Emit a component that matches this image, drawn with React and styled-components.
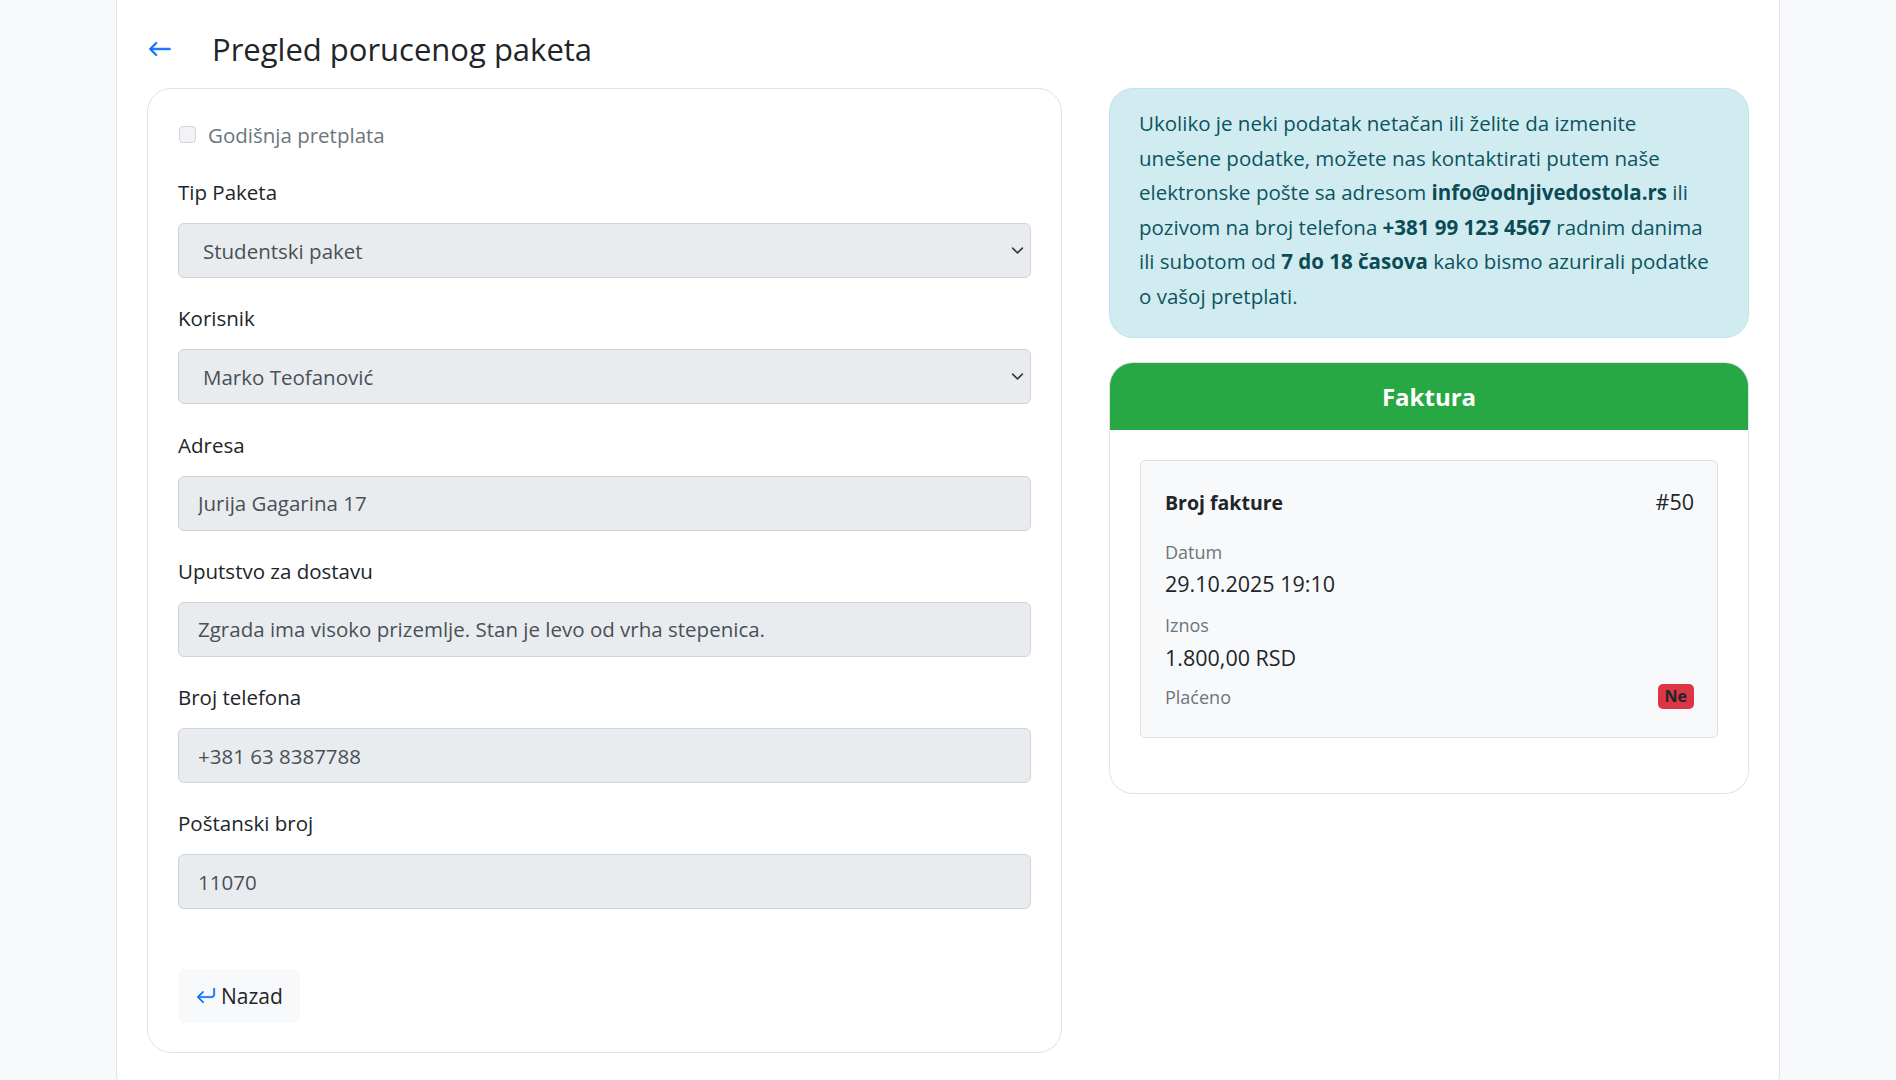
import React from "react";
import styled, { createGlobalStyle } from "styled-components";
import { BsArrowLeft, BsArrowReturnLeft } from "react-icons/bs";

const GlobalStyle = createGlobalStyle`
  * { box-sizing: border-box; }
  html, body {
    margin: 0;
    padding: 0;
    background: #f8f9fa;
    font-family: "Open Sans", "Noto Sans", sans-serif;
    color: #212529;
  }
`;

const Page = styled.div`
  min-height: 1080px;
  overflow: hidden;
`;

const Panel = styled.main`
  width: 1664px;
  margin: -12px auto 0;
  min-height: 1100px;
  background: #fff;
  border: 1px solid #dee2e6;
  border-radius: 12px;
  padding: 12px 30px 0;
`;

const Header = styled.header`
  height: 87px;
  display: flex;
  align-items: center;
  padding-top: 9px;
  padding-left: 1px;
  gap: 40px;
`;

const BackIcon = styled.span`
  display: flex;
  color: #0d6efd;
  font-size: 24px;
  svg {
    stroke: currentColor;
    stroke-width: 0.6px;
  }
`;

const Title = styled.h1`
  margin: 0;
  font-size: 31px;
  font-weight: 400;
  color: #212529;
`;

const Columns = styled.div`
  display: grid;
  grid-template-columns: 915px 1fr;
  gap: 47px;
  align-items: start;
`;

const Card = styled.section`
  border: 1px solid #dee2e6;
  border-radius: 24px;
  padding: 31px 30px 29px;
  background: #fff;
`;

const CheckRow = styled.label`
  display: flex;
  align-items: center;
  gap: 12px;
  height: 29px;
  font-size: 20.5px;
  color: #6c757d;
  margin-bottom: 29px;
`;

const Check = styled.input`
  appearance: none;
  margin: 0 0 0 1px;
  width: 17px;
  height: 17px;
  border: 1px solid #ced4da;
  border-radius: 4px;
  background: #f1f3f5;
`;

const Group = styled.div`
  margin-bottom: 26.3px;
`;

const Label = styled.label`
  display: block;
  font-size: 20.5px;
  line-height: 29px;
  margin-bottom: 16px;
  color: #212529;
`;

const chevron =
  "url(\"data:image/svg+xml,%3csvg xmlns='http://www.w3.org/2000/svg' viewBox='0 0 16 16'%3e%3cpath fill='none' stroke='%23343a40' stroke-linecap='round' stroke-linejoin='round' stroke-width='2' d='m2 5 6 6 6-6'/%3e%3c/svg%3e\")";

const Select = styled.select`
  appearance: none;
  display: block;
  width: 100%;
  height: 55px;
  padding: 0 40px 0 24px;
  font-family: inherit;
  font-size: 20.5px;
  color: #495057;
  background-color: #e9ecef;
  background-image: ${chevron};
  background-repeat: no-repeat;
  background-position: right 4.5px center;
  background-size: 17px 13px;
  border: 1px solid #ced4da;
  border-radius: 6px;
  opacity: 1;
`;

const Input = styled.input`
  display: block;
  width: 100%;
  height: 55px;
  padding: 0 19px;
  font-family: inherit;
  font-size: 20.5px;
  color: #495057;
  background: #e9ecef;
  border: 1px solid #ced4da;
  border-radius: 6px;
  opacity: 1;
`;

const BackButton = styled.button`
  margin-top: 33px;
  display: inline-flex;
  align-items: center;
  gap: 5px;
  height: 54px;
  padding: 0 17px 0 18px;
  background: #f8f9fa;
  border: none;
  border-radius: 7px;
  font-family: inherit;
  font-size: 21px;
  color: #212529;
  svg {
    color: #0d6efd;
    font-size: 20px;
    stroke: currentColor;
    stroke-width: 0.5px;
  }
`;

const Side = styled.aside`
  display: flex;
  flex-direction: column;
  gap: 24px;
`;

const Notice = styled.div`
  background: #d1ecf1;
  border: 1px solid #bee5eb;
  border-radius: 24px;
  padding: 17px 20px 24px 29px;
  color: #0c5460;
  font-size: 20.5px;
  line-height: 34.5px;
  white-space: nowrap;
  b {
    font-weight: 700;
    color: #0b4b56;
  }
`;

const Invoice = styled.div`
  border: 1px solid #dee2e6;
  border-radius: 24px;
  overflow: hidden;
  background: #fff;
`;

const InvoiceHead = styled.div`
  height: 67px;
  background: #28a745;
  color: #fff;
  display: flex;
  align-items: center;
  justify-content: center;
  font-size: 24px;
  font-weight: 700;
`;

const InvoiceBody = styled.div`
  padding: 30px 30px 55px;
`;

const InfoBox = styled.div`
  background: #f8f9fa;
  border: 1px solid #dee2e6;
  border-radius: 5px;
  padding: 27px 23px 28px 24px;
`;

const Row = styled.div`
  display: flex;
  justify-content: space-between;
  align-items: center;
  margin-bottom: ${p => p.$mb || 0}px;
`;

const Strong = styled.span`
  font-size: 19.5px;
  font-weight: 700;
`;

const Value = styled.div`
  font-size: 21.5px;
  line-height: 28px;
  margin-bottom: ${p => p.$mb || 0}px;
`;

const Muted = styled.div`
  font-size: 18px;
  line-height: 24px;
  color: #6c757d;
  margin-bottom: ${p => p.$mb || 0}px;
`;

const Badge = styled.span`
  background: #dc3545;
  color: #212529;
  font-size: 16px;
  font-weight: 700;
  padding: 4px 7px;
  border-radius: 5px;
  line-height: 17px;
`;

const fields = [
  { label: "Adresa", value: "Jurija Gagarina 17" },
  { label: "Uputstvo za dostavu", value: "Zgrada ima visoko prizemlje. Stan je levo od vrha stepenica." },
  { label: "Broj telefona", value: "+381 63 8387788" },
  { label: "Poštanski broj", value: "11070" },
];

export default function App() {
  return (
    <Page>
      <GlobalStyle />
      <Panel>
        <Header>
          <BackIcon>
            <BsArrowLeft />
          </BackIcon>
          <Title>Pregled porucenog paketa</Title>
        </Header>
        <Columns>
          <Card>
            <CheckRow>
              <Check type="checkbox" disabled />
              Godišnja pretplata
            </CheckRow>
            <Group>
              <Label>Tip Paketa</Label>
              <Select disabled defaultValue="s">
                <option value="s">Studentski paket</option>
              </Select>
            </Group>
            <Group>
              <Label>Korisnik</Label>
              <Select disabled defaultValue="m">
                <option value="m">Marko Teofanović</option>
              </Select>
            </Group>
            {fields.map(f => (
              <Group key={f.label}>
                <Label>{f.label}</Label>
                <Input disabled readOnly value={f.value} />
              </Group>
            ))}
            <BackButton>
              <BsArrowReturnLeft />
              Nazad
            </BackButton>
          </Card>
          <Side>
            <Notice>
              Ukoliko je neki podatak netačan ili želite da izmenite
              <br />
              unešene podatke, možete nas kontaktirati putem naše
              <br />
              elektronske pošte sa adresom <b>info@odnjivedostola.rs</b> ili
              <br />
              pozivom na broj telefona <b>+381 99 123 4567</b> radnim danima
              <br />
              ili subotom od <b>7 do 18 časova</b> kako bismo azurirali podatke
              <br />
              o vašoj pretplati.
            </Notice>
            <Invoice>
              <InvoiceHead>Faktura</InvoiceHead>
              <InvoiceBody>
                <InfoBox>
                  <Row $mb={24}>
                    <Strong>Broj fakture</Strong>
                    <Value>#50</Value>
                  </Row>
                  <Muted $mb={6}>Datum</Muted>
                  <Value $mb={15}>29.10.2025 19:10</Value>
                  <Muted $mb={7}>Iznos</Muted>
                  <Value $mb={12}>1.800,00 RSD</Value>
                  <Row>
                    <Muted>Plaćeno</Muted>
                    <Badge>Ne</Badge>
                  </Row>
                </InfoBox>
              </InvoiceBody>
            </Invoice>
          </Side>
        </Columns>
      </Panel>
    </Page>
  );
}
